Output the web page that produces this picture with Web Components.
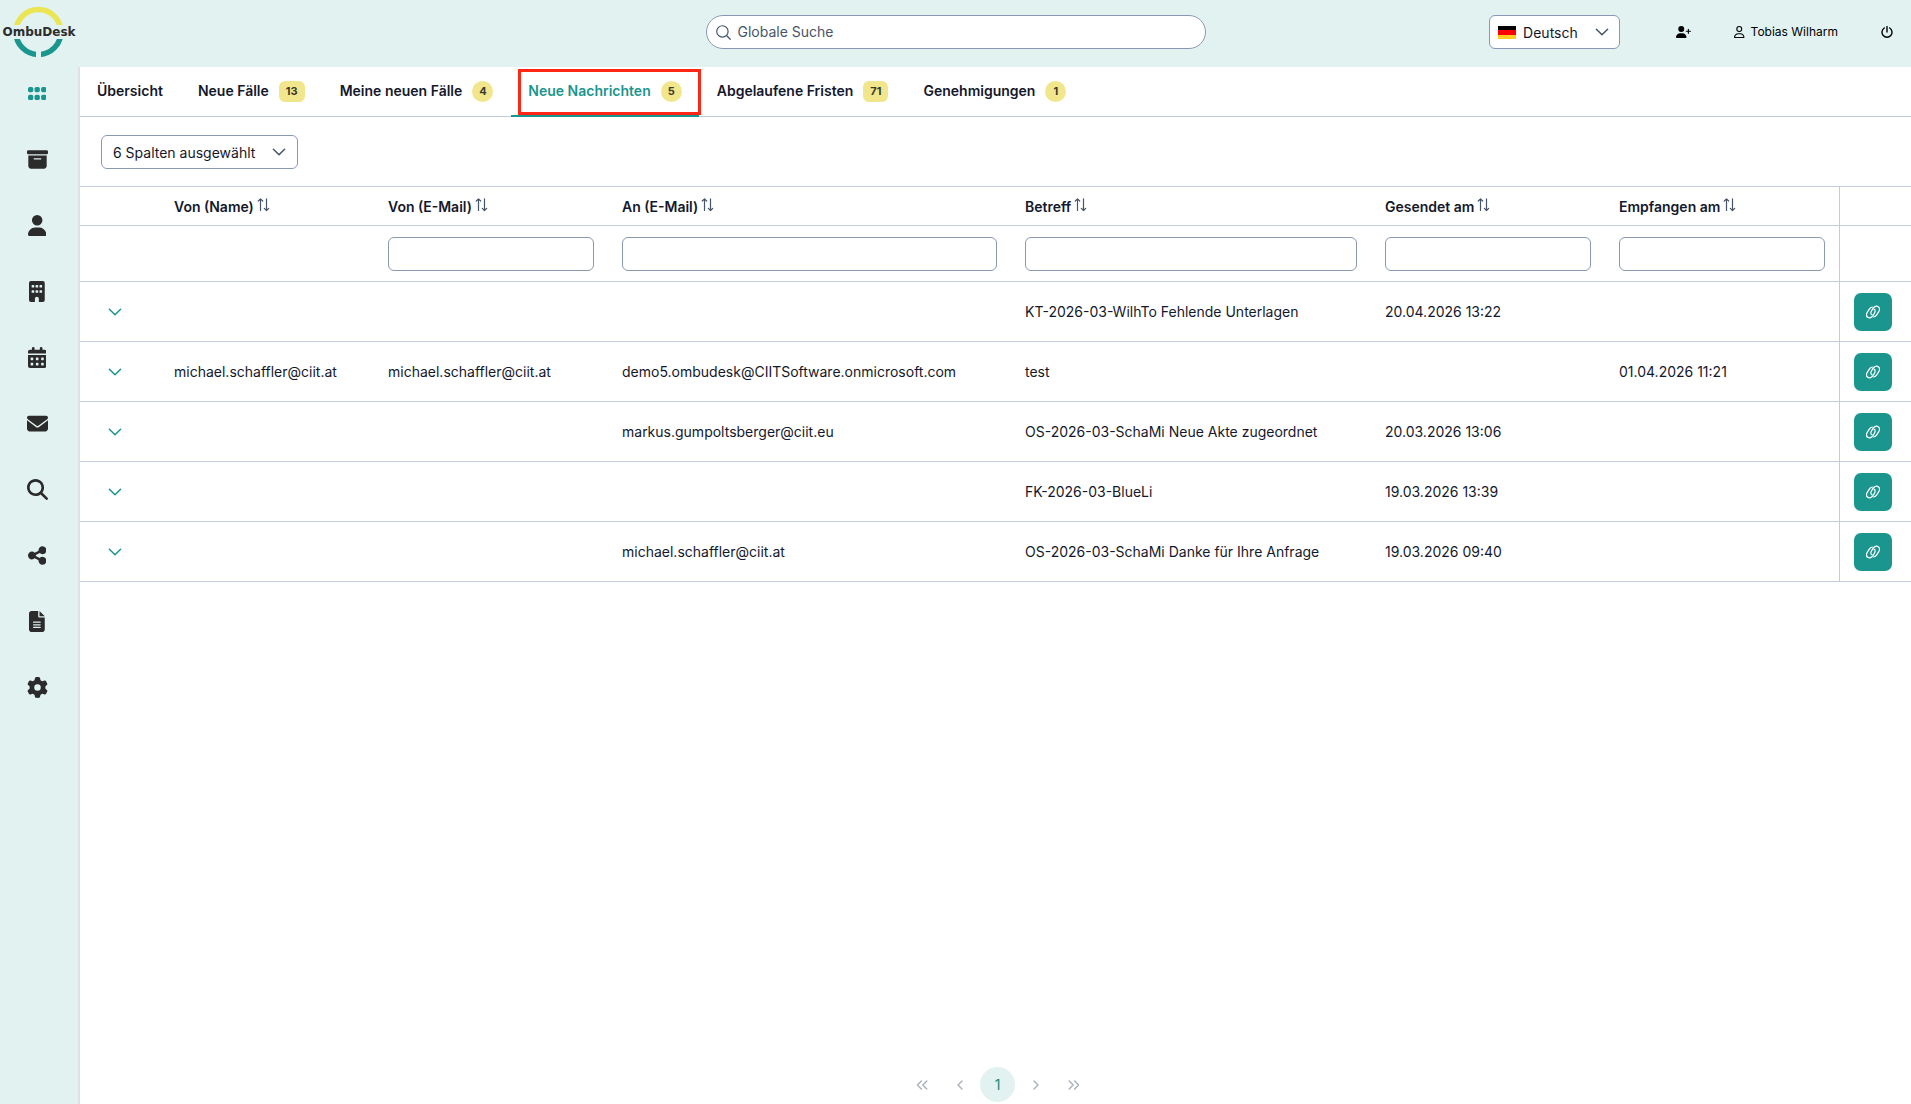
<!DOCTYPE html>
<html lang="de">
<head>
<meta charset="utf-8">
<meta name="viewport" content="width=device-width, initial-scale=1">
<title>OmbuDesk</title>
<style>
  :root {
    --teal: #1a968e;
    --mist: #e1f2f0;
    --ink: #14182b;
    --slate: #475569;
    --line: #c2ccd8;
    --field: #8a98b2;
    --badge: #f2e68c;
  }
  body {
    margin: 0;
    background: #fff;
    color: var(--ink);
    font: 14px/20px Inter, "Liberation Sans", sans-serif;
  }
</style>
</head>
<body>
<desk-app>
  <desk-header slot="header"></desk-header>
  <desk-sidebar slot="sidebar"></desk-sidebar>
  <desk-tabs slot="tabs">
    <desk-tab>Übersicht</desk-tab>
    <desk-tab count="13">Neue Fälle</desk-tab>
    <desk-tab count="4">Meine neuen Fälle</desk-tab>
    <desk-tab count="5" active>Neue Nachrichten</desk-tab>
    <desk-tab count="71">Abgelaufene Fristen</desk-tab>
    <desk-tab count="1">Genehmigungen</desk-tab>
  </desk-tabs>
  <column-picker></column-picker>
  <message-table></message-table>
  <desk-paginator slot="footer"></desk-paginator>
</desk-app>

<script>
const icons = {
  grip: ["0 0 448 512", `<g><rect y="96" width="128" height="128" rx="40"/><rect x="160" y="96" width="128" height="128" rx="40"/><rect x="320" y="96" width="128" height="128" rx="40"/><rect y="288" width="128" height="128" rx="40"/><rect x="160" y="288" width="128" height="128" rx="40"/><rect x="320" y="288" width="128" height="128" rx="40"/></g>`],
  archive: ["0 0 512 512", `<path d="M32 32H480c17.7 0 32 14.3 32 32V96c0 17.7-14.3 32-32 32H32C14.3 128 0 113.7 0 96V64C0 46.3 14.3 32 32 32zm0 128H480V416c0 35.3-28.7 64-64 64H96c-35.3 0-64-28.7-64-64V160zm128 80c0 8.800 7.200 16 16 16H336c8.800 0 16-7.200 16-16s-7.200-16-16-16H176c-8.800 0-16 7.200-16 16z"/>`],
  user: ["0 0 448 512", `<path d="M224 256A128 128 0 1 0 224 0a128 128 0 1 0 0 256zm-45.700 48C79.800 304 0 383.800 0 482.300C0 498.700 13.300 512 29.700 512H418.300c16.400 0 29.700-13.300 29.700-29.700C448 383.800 368.200 304 269.700 304H178.300z"/>`],
  building: ["0 0 384 512", `<path fill-rule="evenodd" d="M48 0H336a48 48 0 0 1 48 48V464a48 48 0 0 1-48 48H240V432a48 48 0 0 0-96 0v80H48a48 48 0 0 1-48-48V48A48 48 0 0 1 48 0zM80 96a16 16 0 0 0-16 16v32a16 16 0 0 0 16 16h32a16 16 0 0 0 16-16V112a16 16 0 0 0-16-16zM176 96a16 16 0 0 0-16 16v32a16 16 0 0 0 16 16h32a16 16 0 0 0 16-16V112a16 16 0 0 0-16-16zM272 96a16 16 0 0 0-16 16v32a16 16 0 0 0 16 16h32a16 16 0 0 0 16-16V112a16 16 0 0 0-16-16zM80 224a16 16 0 0 0-16 16v32a16 16 0 0 0 16 16h32a16 16 0 0 0 16-16V240a16 16 0 0 0-16-16zM176 224a16 16 0 0 0-16 16v32a16 16 0 0 0 16 16h32a16 16 0 0 0 16-16V240a16 16 0 0 0-16-16zM272 224a16 16 0 0 0-16 16v32a16 16 0 0 0 16 16h32a16 16 0 0 0 16-16V240a16 16 0 0 0-16-16z"/>`],
  calendar: ["0 0 448 512", `<path fill-rule="evenodd" d="M128 0a32 32 0 0 1 32 32V64H288V32a32 32 0 0 1 64 0V64h48a48 48 0 0 1 48 48v48H0V112A48 48 0 0 1 48 64H96V32A32 32 0 0 1 128 0zM0 192H448V464a48 48 0 0 1-48 48H48a48 48 0 0 1-48-48zM64 272v32a16 16 0 0 0 16 16h32a16 16 0 0 0 16-16V272a16 16 0 0 0-16-16H80a16 16 0 0 0-16 16zM192 272v32a16 16 0 0 0 16 16h32a16 16 0 0 0 16-16V272a16 16 0 0 0-16-16H208a16 16 0 0 0-16 16zM320 272v32a16 16 0 0 0 16 16h32a16 16 0 0 0 16-16V272a16 16 0 0 0-16-16H336a16 16 0 0 0-16 16zM64 400v32a16 16 0 0 0 16 16h32a16 16 0 0 0 16-16V400a16 16 0 0 0-16-16H80a16 16 0 0 0-16 16zM192 400v32a16 16 0 0 0 16 16h32a16 16 0 0 0 16-16V400a16 16 0 0 0-16-16H208a16 16 0 0 0-16 16zM320 400v32a16 16 0 0 0 16 16h32a16 16 0 0 0 16-16V400a16 16 0 0 0-16-16H336a16 16 0 0 0-16 16z"/>`],
  mail: ["0 0 512 512", `<path d="M48 64C21.500 64 0 85.500 0 112c0 15.100 7.100 29.300 19.200 38.400L236.800 313.600c11.400 8.500 27 8.500 38.400 0L492.800 150.400c12.100-9.100 19.200-23.300 19.200-38.400c0-26.500-21.500-48-48-48H48zM0 176V384c0 35.300 28.700 64 64 64H448c35.300 0 64-28.700 64-64V176L294.400 339.200c-22.800 17.100-54 17.100-76.800 0L0 176z"/>`],
  search: ["0 0 512 512", `<path d="M416 208c0 45.900-14.900 88.300-40 122.700L502.600 457.400c12.500 12.500 12.500 32.800 0 45.300s-32.800 12.500-45.300 0L330.700 376c-34.400 25.200-76.800 40-122.700 40C93.100 416 0 322.900 0 208S93.100 0 208 0S416 93.100 416 208zM208 352a144 144 0 1 0 0-288 144 144 0 1 0 0 288z"/>`],
  share: ["0 0 448 512", `<path d="M352 224c53 0 96-43 96-96s-43-96-96-96s-96 43-96 96c0 4 .2 8 .7 11.900l-94.100 47C145.400 170.200 121.900 160 96 160c-53 0-96 43-96 96s43 96 96 96c25.900 0 49.400-10.200 66.600-26.900l94.100 47c-.5 3.900-.7 7.800-.7 11.900c0 53 43 96 96 96s96-43 96-96s-43-96-96-96c-25.900 0-49.400 10.200-66.600 26.900l-94.100-47c.5-3.900 .7-7.800 .7-11.900s-.2-8-.7-11.900l94.100-47C302.600 213.800 326.100 224 352 224z"/>`],
  file: ["0 0 384 512", `<path d="M64 0C28.700 0 0 28.700 0 64V448c0 35.300 28.700 64 64 64H320c35.300 0 64-28.700 64-64V160H256c-17.700 0-32-14.300-32-32V0H64zM256 0V128H384L256 0zM112 256H272c8.800 0 16 7.200 16 16s-7.200 16-16 16H112c-8.800 0-16-7.200-16-16s7.200-16 16-16zm0 64H272c8.800 0 16 7.200 16 16s-7.200 16-16 16H112c-8.800 0-16-7.200-16-16s7.200-16 16-16zm0 64H272c8.800 0 16 7.200 16 16s-7.200 16-16 16H112c-8.800 0-16-7.200-16-16s7.200-16 16-16z"/>`],
  gear: ["0 0 512 512", `<path d="M495.900 166.600c3.200 8.700 .5 18.400-6.400 24.600l-43.300 39.400c1.100 8.300 1.700 16.800 1.700 25.400s-.6 17.100-1.700 25.400l43.300 39.400c6.900 6.200 9.600 15.900 6.400 24.600c-4.400 11.900-9.700 23.300-15.800 34.300l-4.700 8.100c-6.600 11-14 21.400-22.100 31.200c-5.900 7.200-15.700 9.600-24.500 6.800l-55.700-17.700c-13.400 10.300-28.200 18.900-44 25.400l-12.500 57.100c-2 9.100-9 16.300-18.200 17.800c-13.800 2.300-28 3.500-42.500 3.500s-28.700-1.200-42.500-3.500c-9.200-1.500-16.200-8.700-18.200-17.800l-12.500-57.100c-15.800-6.500-30.600-15.100-44-25.400L83.100 425.900c-8.800 2.800-18.600 .3-24.500-6.800c-8.100-9.800-15.500-20.200-22.100-31.200l-4.700-8.100c-6.100-11-11.400-22.400-15.800-34.300c-3.200-8.700-.5-18.400 6.400-24.600l43.300-39.400C64.600 273.100 64 264.600 64 256s.6-17.100 1.700-25.400L22.400 191.200c-6.900-6.200-9.600-15.900-6.400-24.600c4.400-11.900 9.700-23.300 15.800-34.300l4.700-8.100c6.600-11 14-21.400 22.100-31.200c5.900-7.200 15.700-9.600 24.500-6.800l55.700 17.700c13.400-10.300 28.200-18.900 44-25.400l12.500-57.100c2-9.100 9-16.300 18.200-17.800C227.300 1.200 241.500 0 256 0s28.700 1.200 42.500 3.500c9.200 1.500 16.200 8.700 18.200 17.800l12.500 57.100c15.800 6.500 30.600 15.100 44 25.400l55.700-17.700c8.800-2.800 18.600-.3 24.500 6.800c8.100 9.800 15.500 20.200 22.100 31.200l4.700 8.100c6.100 11 11.400 22.400 15.800 34.300zM256 336a80 80 0 1 0 0-160 80 80 0 1 0 0 160z"/>`],
  userPlus: ["0 0 640 512", `<path d="M96 128a128 128 0 1 1 256 0A128 128 0 1 1 96 128zM0 482.300C0 383.800 79.800 304 178.300 304h91.400C368.200 304 448 383.800 448 482.300c0 16.400-13.300 29.700-29.700 29.700H29.700C13.300 512 0 498.700 0 482.300zM504 312V248H440c-13.300 0-24-10.700-24-24s10.700-24 24-24h64V136c0-13.300 10.700-24 24-24s24 10.700 24 24v64h64c13.300 0 24 10.700 24 24s-10.700 24-24 24H552v64c0 13.300-10.700 24-24 24s-24-10.700-24-24z"/>`],
  userOutline: ["0 0 448 512", `<path d="M304 128a80 80 0 1 0-160 0 80 80 0 1 0 160 0zM96 128a128 128 0 1 1 256 0A128 128 0 1 1 96 128zM49.300 464H398.700c-8.900-63.300-63.300-112-129-112H178.300c-65.700 0-120.100 48.700-129 112zM0 482.300C0 383.800 79.800 304 178.300 304h91.400C368.200 304 448 383.800 448 482.300c0 16.400-13.300 29.700-29.700 29.700H29.700C13.300 512 0 498.700 0 482.300z"/>`],
  power: ["0 0 12 12", `<path class="s" stroke-width="1.4" d="M6 .6v5.400M3.300 2A5 5 0 1 0 8.700 2"/>`],
  lens: ["0 0 14 14", `<path class="s" stroke-width="1.1" d="M6 .7a5.300 5.300 0 1 0 0 10.600A5.300 5.300 0 0 0 6 .7zM9.800 9.800L13.300 13.300"/>`],
  chevron: ["0 0 14 14", `<path class="s" stroke-width="1.5" d="M1.400 4.200L7 9.800l5.600-5.600"/>`],
  sort: ["0 0 14 14", `<path class="s" stroke-width="1.200" d="M3.500 12.500V.8M1.300 3L3.500.8 5.700 3M9.500.8v11.700M7.300 10.300l2.200 2.200 2.200-2.200"/>`],
  link: ["0 0 14 14", `<g class="s" stroke-width="1.200"><path d="M6.100 9.900C4.500 9.300 4.600 7.500 5.500 5.900L6.800 3.700C8.300 1.400 10.600.6 12.200 1.700s1.700 3.200.4 5.200L10.900 9.600C10 11 8.800 11.800 7.600 12"/><path d="M7.900 4.100c1.600.6 1.500 2.400.6 4L7.200 10.300C5.700 12.600 3.400 13.400 1.800 12.300S.1 9.100 1.400 7.100L3.100 4.400C4 3 5.200 2.200 6.400 2"/></g>`],
  first: ["0 0 12 12", `<path class="s" stroke-width="1.4" d="M5.400 2L1.400 6l4 4M10.800 2l-4 4 4 4"/>`],
  prev: ["0 0 12 12", `<path class="s" stroke-width="1.4" d="M8 2L4 6l4 4"/>`],
  next: ["0 0 12 12", `<path class="s" stroke-width="1.4" d="M4 2l4 4-4 4"/>`],
  last: ["0 0 12 12", `<path class="s" stroke-width="1.4" d="M1.200 2l4 4-4 4M6.600 2l4 4-4 4"/>`]
};

// <desk-icon name size>: size is the height in pixels, the width follows the viewBox
class DeskIcon extends HTMLElement {
  connectedCallback() {
    const [box, shape] = icons[this.getAttribute("name")];
    const size = this.getAttribute("size") || 14;
    this.attachShadow({ mode: "open" }).innerHTML = `
      <style>
        :host { display: inline-block; line-height: 0; }
        svg { display: block; fill: currentColor; }
        .s { fill: none; stroke: currentColor; stroke-linecap: round; stroke-linejoin: round; }
      </style>
      <svg viewBox="${box}" height="${size}" aria-hidden="true">${shape}</svg>`;
  }
}

class DeskApp extends HTMLElement {
  connectedCallback() {
    this.attachShadow({ mode: "open" }).innerHTML = `
      <style>
        :host {
          display: grid;
          grid-template: auto 1fr / 80px minmax(0, 1fr);
          min-height: 100vh;
        }
        .top { grid-column: 1 / -1; }
        main { display: flex; flex-direction: column; }
        .footer { margin-top: auto; }
      </style>
      <div class="top"><slot name="header"></slot></div>
      <slot name="sidebar"></slot>
      <main>
        <slot name="tabs"></slot>
        <slot></slot>
        <div class="footer"><slot name="footer"></slot></div>
      </main>`;
  }
}

class DeskLogo extends HTMLElement {
  connectedCallback() {
    this.attachShadow({ mode: "open" }).innerHTML = `
      <style>
        :host { display: block; }
        svg { display: block; }
        text { font: bold 12px "DejaVu Sans", sans-serif; fill: #2d2d2d; }
      </style>
      <svg width="78" height="60" viewBox="0 0 78 60" role="img" aria-label="OmbuDesk">
        <clipPath id="top"><path d="M0 0h78v23H0z"/></clipPath>
        <clipPath id="bottom"><path d="M0 37h36v23H0zM41 37h37v23H41z"/></clipPath>
        <g fill="none" stroke-width="5.5">
          <circle cx="38.400" cy="30" r="22.500" stroke="#ebe553" clip-path="url(#top)"/>
          <circle cx="38.400" cy="30" r="22.500" stroke="#1a968e" clip-path="url(#bottom)"/>
        </g>
        <text x="39" y="34" text-anchor="middle">OmbuDesk</text>
      </svg>`;
  }
}

class DeskHeader extends HTMLElement {
  connectedCallback() {
    this.attachShadow({ mode: "open" }).innerHTML = `
      <style>
        :host { display: block; background: var(--mist); }
        header {
          display: grid;
          grid-template-columns: 1fr minmax(200px, 500px) 1fr;
          align-items: center;
          height: 64px;
          padding-bottom: 3px;
        }
        .search {
          box-sizing: border-box;
          display: flex;
          align-items: center;
          gap: 7px;
          height: 34px;
          padding: 0 9px;
          background: #fff;
          border: 1px solid var(--field);
          border-radius: 17px;
          color: var(--slate);
        }
        input {
          flex: 1;
          border: 0;
          padding: 0;
          outline: 0;
          background: none;
          font: inherit;
          color: inherit;
        }
        input::placeholder { color: var(--slate); opacity: 1; }
        .actions {
          display: flex;
          align-items: center;
          justify-content: flex-end;
          gap: 43px;
          padding-right: 18px;
        }
        .lang {
          box-sizing: border-box;
          display: grid;
          align-items: center;
          width: 131px;
          height: 34px;
          margin-right: 13px;
          background: #fff;
          border: 1px solid var(--field);
          border-radius: 6px;
        }
        .lang > * { grid-area: 1 / 1; }
        .flag, .lang desk-icon { pointer-events: none; z-index: 1; }
        .flag { margin-left: 8px; }
        .lang desk-icon { justify-self: end; margin-right: 10px; color: var(--slate); }
        select {
          appearance: none;
          width: 100%;
          height: 32px;
          padding: 2px 30px 0 33px;
          border: 0;
          border-radius: 6px;
          background: none;
          font: inherit;
          color: var(--ink);
        }
        button {
          display: flex;
          align-items: center;
          gap: 6px;
          padding: 0;
          border: 0;
          background: none;
          font: 12px/20px Inter, sans-serif;
          color: #000;
          cursor: pointer;
        }
      </style>
      <header>
        <desk-logo></desk-logo>
        <label class="search">
          <desk-icon name="lens" size="15"></desk-icon>
          <input type="search" placeholder="Globale Suche" aria-label="Globale Suche">
        </label>
        <div class="actions">
          <div class="lang">
            <svg class="flag" width="18" height="13" aria-hidden="true">
              <path fill="#000" d="M0 0h18v4H0z"/>
              <path fill="#f00" d="M0 4h18v5H0z"/>
              <path fill="#fc2" d="M0 9h18v4H0z"/>
            </svg>
            <select aria-label="Sprache"><option>Deutsch</option></select>
            <desk-icon name="chevron" size="14"></desk-icon>
          </div>
          <button aria-label="Benutzer anlegen"><desk-icon name="userPlus" size="12"></desk-icon></button>
          <button><desk-icon name="userOutline" size="12"></desk-icon>Tobias Wilharm</button>
          <button aria-label="Abmelden"><desk-icon name="power" size="12"></desk-icon></button>
        </div>
      </header>`;
  }
}

class DeskSidebar extends HTMLElement {
  connectedCallback() {
    const items = [
      ["grip", "Dashboard"], ["archive", "Akten"], ["user", "Personen"], ["building", "Organisationen"],
      ["calendar", "Kalender"], ["mail", "Nachrichten"], ["search", "Suche"], ["share", "Verteiler"],
      ["file", "Berichte"], ["gear", "Einstellungen"]
    ];
    this.attachShadow({ mode: "open" }).innerHTML = `
      <style>
        :host { display: block; background: var(--mist); border-right: 2px solid #e0e1e7; }
        nav { display: flex; flex-direction: column; gap: 20px; padding: 3px 4px 0 0; }
        a { display: grid; place-items: center; height: 46px; color: #2b2b2b; }
        a:first-child { color: var(--teal); }
      </style>
      <nav>${items.map(([icon, label]) => `<a href="#${icon}" aria-label="${label}"><desk-icon name="${icon}" size="21"></desk-icon></a>`).join("")}</nav>`;
  }
}

class DeskTabs extends HTMLElement {
  connectedCallback() {
    this.attachShadow({ mode: "open" }).innerHTML = `
      <style>
        :host { display: block; border-bottom: 1px solid var(--line); }
        nav { display: flex; height: 49px; }
      </style>
      <nav><slot></slot></nav>`;
  }
}

class DeskTab extends HTMLElement {
  connectedCallback() {
    const count = this.getAttribute("count");
    this.attachShadow({ mode: "open" }).innerHTML = `
      <style>
        :host { display: block; position: relative; height: 50px; }
        a {
          box-sizing: border-box;
          display: flex;
          align-items: center;
          gap: 10px;
          height: 50px;
          padding: 0 17px 2px;
          font-weight: 600;
          color: var(--ink);
          text-decoration: none;
          white-space: nowrap;
        }
        :host(:not(:last-child)) { margin-right: 1px; }
        :host([active]) a { color: var(--teal); border-bottom: 2px solid var(--teal); padding-bottom: 0; }
        .mark {
          position: absolute;
          inset: 2px -2px 2px 7px;
          border: 3px solid #ff2614;
          pointer-events: none;
        }
      </style>
      <a href="#"><slot></slot>${count ? `<count-badge>${count}</count-badge>` : ""}</a>
      ${this.hasAttribute("active") ? `<span class="mark"></span>` : ""}`;
  }
}

class CountBadge extends HTMLElement {
  connectedCallback() {
    this.toggleAttribute("round", this.textContent.length === 1);
    this.attachShadow({ mode: "open" }).innerHTML = `
      <style>
        :host {
          box-sizing: border-box;
          display: block;
          min-width: 21px;
          padding: 0 7px;
          border-radius: 6px;
          background: var(--badge);
          color: #3a3a2c;
          font-size: 11px;
          font-weight: 700;
          line-height: 21px;
          text-align: center;
        }
        :host([round]) { width: 21px; border-radius: 50%; }
      </style>
      <slot></slot>`;
  }
}

class ColumnPicker extends HTMLElement {
  connectedCallback() {
    this.attachShadow({ mode: "open" }).innerHTML = `
      <style>
        :host { display: block; padding: 18px 21px 17px; }
        .box {
          box-sizing: border-box;
          display: inline-grid;
          align-items: center;
          vertical-align: top;
          width: 197px;
          height: 34px;
          border: 1px solid var(--field);
          border-radius: 6px;
        }
        .box > * { grid-area: 1 / 1; }
        select {
          appearance: none;
          width: 100%;
          height: 32px;
          padding: 2px 32px 0 11px;
          border: 0;
          border-radius: 6px;
          background: #fff;
          font: inherit;
          color: var(--ink);
        }
        desk-icon { justify-self: end; margin-right: 11px; color: var(--slate); pointer-events: none; }
      </style>
      <div class="box">
        <select aria-label="Spalten"><option>6 Spalten ausgewählt</option></select>
        <desk-icon name="chevron" size="14"></desk-icon>
      </div>`;
  }
}

class MessageTable extends HTMLElement {
  connectedCallback() {
    const heads = ["Von (Name)", "Von (E-Mail)", "An (E-Mail)", "Betreff", "Gesendet am", "Empfangen am"];
    const rows = [
      ["", "", "", "KT-2026-03-WilhTo Fehlende Unterlagen", "20.04.2026 13:22", ""],
      ["michael.schaffler@ciit.at", "michael.schaffler@ciit.at", "demo5.ombudesk@CIITSoftware.onmicrosoft.com", "test", "", "01.04.2026 11:21"],
      ["", "", "markus.gumpoltsberger@ciit.eu", "OS-2026-03-SchaMi Neue Akte zugeordnet", "20.03.2026 13:06", ""],
      ["", "", "", "FK-2026-03-BlueLi", "19.03.2026 13:39", ""],
      ["", "", "michael.schaffler@ciit.at", "OS-2026-03-SchaMi Danke für Ihre Anfrage", "19.03.2026 09:40", ""]
    ];
    this.attachShadow({ mode: "open" }).innerHTML = `
      <style>
        :host { display: block; border-top: 1px solid var(--line); }
        table { width: 100%; table-layout: fixed; border-collapse: separate; border-spacing: 0; }
        .toggle { width: 80px; }
        .name { width: 214px; }
        .mid { width: 234px; }
        .subject { width: 360px; }
        .action { width: 72px; }
        th, td {
          box-sizing: border-box;
          padding: 0 14px;
          border-bottom: 1px solid var(--line);
          text-align: left;
          white-space: nowrap;
        }
        th { height: 39px; padding-top: 2px; font-weight: 600; }
        th desk-icon { margin-left: 3px; color: var(--slate); }
        td { height: 60px; }
        .filter td { height: 56px; }
        th:last-child, td:last-child { border-left: 1px solid var(--line); }
        input {
          box-sizing: border-box;
          display: block;
          width: 100%;
          height: 34px;
          padding: 0 10px;
          border: 1px solid var(--field);
          border-radius: 6px;
          font: inherit;
          color: inherit;
        }
        button { display: grid; place-items: center; padding: 0; border: 0; cursor: pointer; }
        .expand { width: 42px; height: 34px; background: none; color: var(--teal); }
        .open { width: 38px; height: 38px; border-radius: 7px; background: var(--teal); color: #fff; }
      </style>
      <table>
        <colgroup>
          <col class="toggle"><col class="name"><col class="mid"><col>
          <col class="subject"><col class="mid"><col class="mid"><col class="action">
        </colgroup>
        <thead>
          <tr><th></th>${heads.map(head => `<th>${head}<desk-icon name="sort" size="14"></desk-icon></th>`).join("")}<th></th></tr>
          <tr class="filter"><td></td>${heads.map((head, i) => `<td>${i ? `<input type="text" aria-label="${head}">` : ""}</td>`).join("")}<td></td></tr>
        </thead>
        <tbody>${rows.map(row => `
          <tr>
            <td><button class="expand" aria-label="Aufklappen"><desk-icon name="chevron" size="14"></desk-icon></button></td>
            ${row.map(cell => `<td>${cell}</td>`).join("")}
            <td><button class="open" aria-label="Verknüpfung"><desk-icon name="link" size="14"></desk-icon></button></td>
          </tr>`).join("")}
        </tbody>
      </table>`;
  }
}

class DeskPaginator extends HTMLElement {
  connectedCallback() {
    const arrow = (icon, label) => `<button disabled aria-label="${label}"><desk-icon name="${icon}" size="12"></desk-icon></button>`;
    this.attachShadow({ mode: "open" }).innerHTML = `
      <style>
        :host { display: flex; justify-content: center; gap: 3px; padding: 10px 0 2px 4px; }
        button {
          display: grid;
          place-items: center;
          width: 35px;
          height: 35px;
          padding: 0;
          border: 0;
          border-radius: 50%;
          background: none;
          color: #a9b0bb;
          font: inherit;
        }
        .current { background: var(--mist); color: #24887a; }
      </style>
      ${arrow("first", "Erste Seite")}${arrow("prev", "Vorherige Seite")}
      <button class="current" aria-current="page">1</button>
      ${arrow("next", "Nächste Seite")}${arrow("last", "Letzte Seite")}`;
  }
}

customElements.define("desk-icon", DeskIcon);
customElements.define("desk-logo", DeskLogo);
customElements.define("count-badge", CountBadge);
customElements.define("desk-app", DeskApp);
customElements.define("desk-header", DeskHeader);
customElements.define("desk-sidebar", DeskSidebar);
customElements.define("desk-tabs", DeskTabs);
customElements.define("desk-tab", DeskTab);
customElements.define("column-picker", ColumnPicker);
customElements.define("message-table", MessageTable);
customElements.define("desk-paginator", DeskPaginator);
</script>
</body>
</html>
